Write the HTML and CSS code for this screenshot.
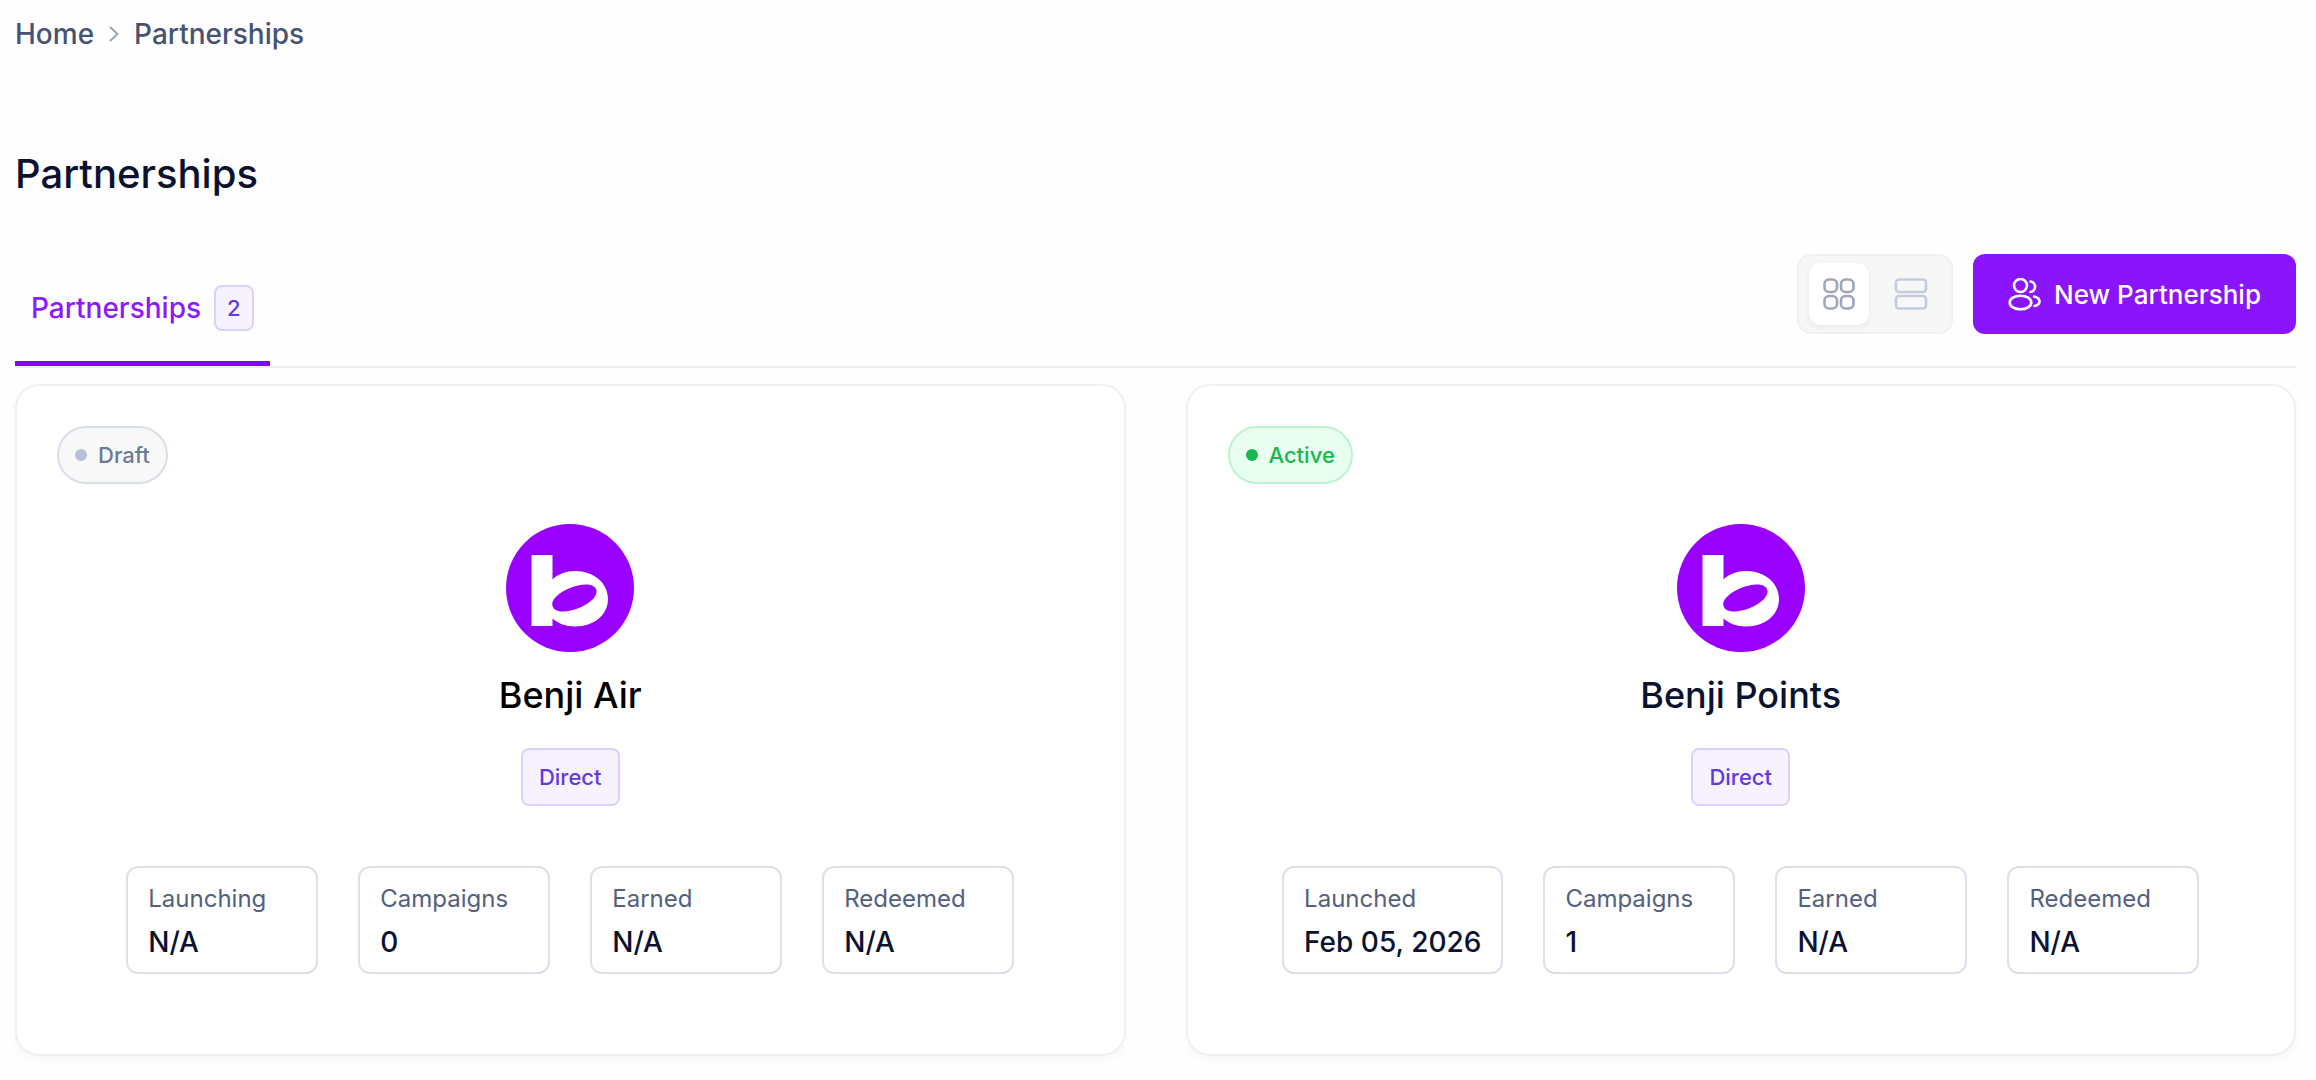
FILE: index.html
```html
<!DOCTYPE html>
<html lang="en">
<head>
<meta charset="utf-8">
<meta name="viewport" content="width=device-width, initial-scale=1">
<title>Partnerships</title>
<link rel="stylesheet" href="styles.css">
</head>
<body>
<svg class="sprite" aria-hidden="true">
  <symbol id="logo" viewBox="0 0 128 128">
    <circle cx="64" cy="64" r="64" fill="#9900ff"/>
    <path fill="#fff" fill-rule="evenodd" d="M25.500 31H46.500V55.500C52 50 60 47 69 47C88 47 102 59 102 75C102 91 88 102.500 69 102.500C60 102.500 52 99.500 46.500 94.500V102H25.500ZM46.500 82C48.500 89 61 89 73 84C85 79 93 71 90 65C87 59 75 59.500 64 64C53 68.500 44.500 76 46.500 82Z"/>
  </symbol>
</svg>
<nav class="breadcrumb" aria-label="Breadcrumb">
  <a href="#">Home</a>
  <svg class="chevron" viewBox="0 0 12 16" aria-hidden="true"><path d="M2 1 9.500 8 2 15"/></svg>
  <a href="#" aria-current="page">Partnerships</a>
</nav>
<main>
  <h1 class="title">Partnerships</h1>
  <div class="toolbar">
    <div class="tabs" role="tablist">
      <button class="tab" role="tab" aria-selected="true">Partnerships <span class="count">2</span></button>
    </div>
    <div class="actions">
      <div class="toggle" role="group" aria-label="View">
        <button class="toggle-item active" aria-label="Grid view" aria-pressed="true">
          <svg class="icon" viewBox="0 0 34 34" aria-hidden="true"><rect x="2.500" y="2.500" width="12.500" height="12.500" rx="4.500"/><rect x="19" y="2.500" width="12.500" height="12.500" rx="4.500"/><rect x="2.500" y="19" width="12.500" height="12.500" rx="4.500"/><rect x="19" y="19" width="12.500" height="12.500" rx="4.500"/></svg>
        </button>
        <button class="toggle-item" aria-label="List view" aria-pressed="false">
          <svg class="icon" viewBox="0 0 34 34" aria-hidden="true"><rect x="2" y="2.500" width="30" height="12.500" rx="3"/><rect x="2" y="19" width="30" height="12.500" rx="3"/></svg>
        </button>
      </div>
      <button class="primary">
        <svg class="icon" viewBox="0 0 34 34" aria-hidden="true"><circle cx="12.500" cy="8.500" r="6.500"/><ellipse cx="12.500" cy="25.500" rx="10.800" ry="6.800"/><path d="M22.500 4.500a5.300 5.300 0 0 1 0 10.500M26 19.500c3.500.8 5.500 2.700 5.500 5s-2 3.800-5 4.500"/></svg>
        New Partnership
      </button>
    </div>
  </div>
  <div class="cards">
    <article class="card">
      <span class="status draft">Draft</span>
      <svg class="logo" role="img" aria-label="Benji"><use href="#logo"/></svg>
      <h2 class="name black">Benji Air</h2>
      <span class="tag">Direct</span>
      <dl class="stats">
        <div class="stat"><dt>Launching</dt><dd>N/A</dd></div>
        <div class="stat"><dt>Campaigns</dt><dd>0</dd></div>
        <div class="stat"><dt>Earned</dt><dd>N/A</dd></div>
        <div class="stat"><dt>Redeemed</dt><dd>N/A</dd></div>
      </dl>
    </article>
    <article class="card">
      <span class="status live">Active</span>
      <svg class="logo" role="img" aria-label="Benji"><use href="#logo"/></svg>
      <h2 class="name">Benji Points</h2>
      <span class="tag">Direct</span>
      <dl class="stats">
        <div class="stat"><dt>Launched</dt><dd>Feb 05, 2026</dd></div>
        <div class="stat"><dt>Campaigns</dt><dd>1</dd></div>
        <div class="stat"><dt>Earned</dt><dd>N/A</dd></div>
        <div class="stat"><dt>Redeemed</dt><dd>N/A</dd></div>
      </dl>
    </article>
  </div>
</main>
</body>
</html>
```
FILE: styles.css
```css
* { box-sizing: border-box; }
body {
  margin: 0;
  padding: 14px 20px 24px 15px;
  background: #fefefe;
  color: #0a1230;
  font-family: Inter, "Liberation Sans", sans-serif;
  font-size: 28px;
  font-weight: 500;
}
button { font: inherit; border: 0; background: none; cursor: pointer; }
h1, h2, dl, dd { margin: 0; font-weight: 500; }
.sprite { display: none; }

.breadcrumb { display: flex; align-items: center; gap: 14px; line-height: 40px; }
.breadcrumb a { color: #475372; text-decoration: none; }
.chevron { width: 12px; height: 16px; fill: none; stroke: #9aa5bd; stroke-width: 2; }

.title { margin: 92px 0 52px; font-size: 40px; line-height: 56px; }

.toolbar {
  display: flex;
  justify-content: space-between;
  align-items: flex-start;
  border-bottom: 2px solid #eeeef1;
}
.tab {
  display: flex;
  align-items: center;
  gap: 13px;
  height: 112px;
  padding: 0 16px;
  border-bottom: 5px solid #7c0aff;
  color: #8c1aff;
}
.count, .tag {
  border: 2px solid #ddd0fd;
  border-radius: 8px;
  background: #f6f3ff;
  color: #6339e0;
  font-size: 22px;
}
.count { padding: 0 11px; line-height: 42px; }
.actions { display: flex; gap: 20px; }
.toggle {
  display: flex;
  align-items: center;
  gap: 12px;
  height: 80px;
  padding: 0 10px;
  border: 2px solid #f1f1f4;
  border-radius: 14px;
  background: #f7f7f8;
}
.toggle-item {
  display: grid;
  place-items: center;
  width: 60px;
  height: 62px;
  padding: 0;
  border-radius: 12px;
  color: #c3cbdd;
}
.toggle-item.active { background: #fff; color: #9da7bb; box-shadow: 0 2px 6px #0000000f; }
.icon { width: 34px; height: 34px; fill: none; stroke: currentColor; stroke-width: 2.600; stroke-linecap: round; }
.primary {
  display: flex;
  align-items: center;
  gap: 12px;
  height: 80px;
  padding: 0 35px;
  border-radius: 12px;
  background: #8a14fa;
  color: #fff;
  font-size: 26px;
}

.cards { display: grid; grid-template-columns: 1fr 1fr; gap: 60px; margin-top: 16px; }
.card {
  display: flex;
  flex-direction: column;
  align-items: center;
  padding: 40px 40px 80px;
  border: 2px solid #f0f0f4;
  border-radius: 24px;
  background: #fff;
  box-shadow: 0 4px 8px #00000008;
}
.status {
  display: flex;
  align-items: center;
  align-self: flex-start;
  gap: 11px;
  padding: 0 16px;
  border: 2px solid;
  border-radius: 29px;
  font-size: 22px;
  line-height: 54px;
}
.status::before { content: ""; width: 12px; height: 12px; border-radius: 50%; background: currentColor; }
.draft { border-color: #d8deea; background: #f8f8f9; color: #6d7a94; }
.draft::before { background: #b9c1d8; }
.live { border-color: #bff2d0; background: #e8fef0; color: #18b850; }
.logo { width: 128px; height: 128px; margin-top: 40px; }
.name { margin: 19px 0 29px; font-size: 36px; line-height: 48px; }
.name.black { color: #000; }
.tag { padding: 0 16px; line-height: 54px; }
.stats { display: flex; justify-content: center; gap: 40px; margin-top: 60px; }
.stat {
  min-width: 192px;
  padding: 13px 20px 12px;
  border: 2px solid #dbe0eb;
  border-radius: 12px;
  line-height: 36px;
}
.stat dt { margin-bottom: 7px; color: #536080; font-size: 24px; font-weight: 400; }
```
